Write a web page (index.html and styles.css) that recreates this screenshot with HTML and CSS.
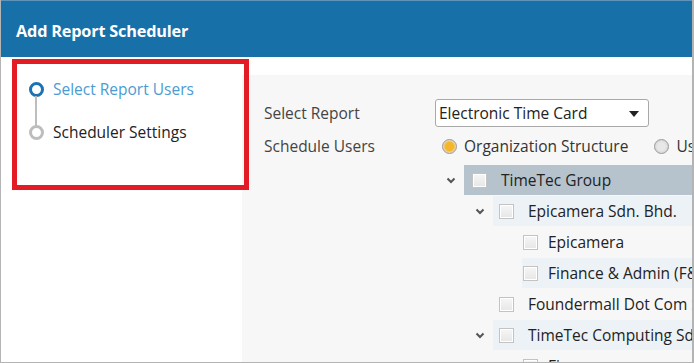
FILE: index.html
```html
<!DOCTYPE html>
<html lang="en">

<head>
    <meta charset="UTF-8">
    <title>Add Report Scheduler</title>
    <link rel="stylesheet" href="styles.css">
</head>

<body>
    <div class="dialog">
        <div class="header">Add Report Scheduler</div>
        <div class="body">
            <div class="sidebar">
                <ul class="steps">
                    <li class="step active"><span class="dot"></span>Select Report Users</li>
                    <li class="step"><span class="dot"></span>Scheduler Settings</li>
                </ul>
            </div>
            <div class="main">
                <div class="form-row">
                    <div class="label">Select Report</div>
                    <div class="select">Electronic Time Card<span class="caret"></span></div>
                </div>
                <div class="form-row users">
                    <div class="label">Schedule Users</div>
                    <div class="radios">
                        <span class="radio checked"></span><span class="radio-text">Organization Structure</span>
                        <span class="radio"></span><span class="radio-text">User</span>
                    </div>
                </div>
                <ul class="tree">
                    <li class="node lv0 sel">
                        <span class="chev"><svg width="10" height="7" viewBox="0 0 10 7"><polyline points="1.5,1.5 5,5 8.5,1.5" fill="none" stroke="#555" stroke-width="2"/></svg></span>
                        <span class="item"><span class="check"></span>TimeTec Group</span>
                    </li>
                    <li class="node lv1 hl">
                        <span class="chev"><svg width="10" height="7" viewBox="0 0 10 7"><polyline points="1.5,1.5 5,5 8.5,1.5" fill="none" stroke="#555" stroke-width="2"/></svg></span>
                        <span class="item"><span class="check"></span>Epicamera Sdn. Bhd.</span>
                    </li>
                    <li class="node lv2">
                        <span class="chev"></span>
                        <span class="item"><span class="check"></span>Epicamera</span>
                    </li>
                    <li class="node lv2 hl">
                        <span class="chev"></span>
                        <span class="item"><span class="check"></span>Finance &amp; Admin (F&amp;A)</span>
                    </li>
                    <li class="node lv1">
                        <span class="chev"></span>
                        <span class="item"><span class="check"></span>Foundermall Dot Com Sdn. Bhd.</span>
                    </li>
                    <li class="node lv1 hl">
                        <span class="chev"><svg width="10" height="7" viewBox="0 0 10 7"><polyline points="1.5,1.5 5,5 8.5,1.5" fill="none" stroke="#555" stroke-width="2"/></svg></span>
                        <span class="item"><span class="check"></span>TimeTec Computing Sdn. Bhd.</span>
                    </li>
                    <li class="node lv2">
                        <span class="chev"></span>
                        <span class="item"><span class="check"></span>Finance</span>
                    </li>
                </ul>
            </div>
        </div>
        <div class="callout"></div>
    </div>
</body>

</html>
```

FILE: styles.css
```css
* {
    margin: 0;
    padding: 0;
    box-sizing: border-box;
}

html,
body {
    width: 694px;
    height: 363px;
    overflow: hidden;
    background: #fff;
}

body {
    font-family: "Open Sans", "Noto Sans", sans-serif;
    font-size: 15.5px;
    color: #333;
}

.dialog {
    position: relative;
    width: 694px;
    height: 363px;
    border: 1px solid #b4b4b4;
    border-top: 0;
    border-right-width: 2px;
    overflow: hidden;
}

.header {
    height: 57px;
    background: #1870a9;
    border-top: 1px solid #5f93ba;
    color: #fff;
    font-size: 16.3px;
    font-weight: 700;
    padding: 19px 0 0 15px;
    letter-spacing: -0.2px;
}

.body {
    display: flex;
    height: 305px;
}

.sidebar {
    width: 241px;
    flex: none;
    padding: 22px 0 0 28px;
}

.steps {
    list-style: none;
}

.step {
    position: relative;
    display: flex;
    align-items: center;
    height: 20px;
    margin-bottom: 23px;
    font-size: 15.5px;
    color: #222;
}

.step.active {
    color: #4a9cd3;
}

.dot {
    width: 15px;
    height: 15px;
    border-radius: 50%;
    border: 3px solid #bdbdbd;
    background: #fff;
    margin-right: 9px;
    flex: none;
}

.active .dot {
    border-color: #1b73b3;
}

.active .dot::after {
    content: "";
    position: absolute;
    left: 6px;
    top: 17px;
    width: 2px;
    height: 30px;
    background: #bdbdbd;
}

.main {
    flex: 1;
    margin-top: 18px;
    background: #f7f7f7;
    padding: 24px 0 0 22px;
    overflow: hidden;
}

.form-row {
    display: flex;
    align-items: center;
    height: 28px;
}

.form-row.users {
    height: 38px;
}

.label {
    width: 171px;
    flex: none;
    color: #444;
}

.select {
    position: relative;
    width: 214px;
    height: 28px;
    line-height: 26px;
    padding-left: 3px;
    background: #fff;
    border: 1px solid #a9a9a9;
    border-radius: 3px;
    color: #222;
    white-space: nowrap;
}

.caret {
    position: absolute;
    right: 9px;
    top: 11px;
    border-left: 5px solid transparent;
    border-right: 5px solid transparent;
    border-top: 6px solid #222;
}

.radios {
    display: flex;
    align-items: center;
    white-space: nowrap;
}

.radio {
    width: 15px;
    height: 15px;
    border-radius: 50%;
    border: 1px solid #9a9a9a;
    background: radial-gradient(circle, #e8e8e8 40%, #c8c8c8 100%);
    margin: 0 7px 0 7px;
    flex: none;
}

.radio.checked {
    background: radial-gradient(circle, #f5b62b 45%, #f1cf80 60%, #dcdcdc 75%);
}

.radio-text {
    margin-right: 19px;
    color: #333;
}

.tree {
    list-style: none;
    margin-left: 171px;
}

.node {
    display: flex;
    height: 30px;
    margin-bottom: 1px;
    white-space: nowrap;
}

.lv1 {
    margin-left: 29px;
}

.lv2 {
    margin-left: 58px;
}

.chev {
    width: 29px;
    flex: none;
    display: flex;
    align-items: center;
    justify-content: center;
    padding-left: 2px;
}

.item {
    flex: 1;
    display: flex;
    align-items: center;
    padding-left: 8px;
    color: #222;
}

.lv1 .item {
    padding-left: 6px;
}

.lv2 .item {
    padding-left: 1px;
}

.sel .item {
    background: #b6c3cd;
}

.hl .item {
    background: #edf2f6;
}

.check {
    width: 15px;
    height: 15px;
    border: 1px solid #c3c3c3;
    background: linear-gradient(#f6f6f6, #e6e6e6);
    box-shadow: inset 0 0 0 1px #fff;
    margin-right: 14px;
    flex: none;
}

.lv2 .check {
    margin-right: 10px;
}

.callout {
    position: absolute;
    left: 11px;
    top: 59px;
    width: 237px;
    height: 131px;
    border: 5px solid #e31b24;
    pointer-events: none;
}
```
